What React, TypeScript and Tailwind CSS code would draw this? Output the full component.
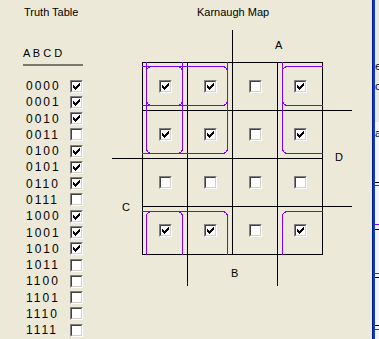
const ON = new Set([0, 1, 2, 4, 5, 6, 8, 9, 10]);
const GRAY = [0, 1, 3, 2];

function Check({ on }: { on: boolean }) {
  return (
    <div className="h-[13px] w-[13px] shrink-0 border border-b-white border-l-[#808080] border-r-white border-t-[#808080]">
      <div className="h-full w-full border border-b-[#d4d0c8] border-l-[#404040] border-r-[#d4d0c8] border-t-[#404040] bg-white p-[1px]">
        {on && (
          <svg width="7" height="7" viewBox="0 0 7 7" shapeRendering="crispEdges" className="block">
            <path
              fill="#000"
              d="M6 0h1v1h-1z M5 1h2v1h-2z M0 2h1v1h-1z M4 2h3v1h-3z M0 3h2v1h-2z M3 3h3v1h-3z M0 4h5v1h-5z M1 5h3v1h-3z M2 6h1v1h-1z"
            />
          </svg>
        )}
      </div>
    </div>
  );
}

function TruthTable() {
  const rows = Array.from({ length: 16 }, (_, i) => i);
  return (
    <div className="w-[100px] shrink-0 pl-[23px]">
      <div className="ml-[1px] mt-[6px] leading-[13px]">Truth Table</div>
      <div className="mt-[28px] leading-[13px]">A B C D</div>
      <div className="mt-[4px] h-[2px] w-[60px] bg-[#7a786d]" />
      <div className="mt-[12px] pl-[3px]">
        {rows.map((i) => (
          <div key={i} className="flex h-[16.27px] items-center">
            <span className="w-[44px] text-[12px] leading-[14px] tracking-[2px]">
              {i.toString(2).padStart(4, "0")}
            </span>
            <Check on={ON.has(i)} />
          </div>
        ))}
      </div>
    </div>
  );
}

// loops are clipped to the grid, wrapping groups stick out past the edge
const LOOPS = [
  { x: 146.5, y: 66.5, w: 81, h: 87 },
  { x: 146.5, y: 40, w: 81, h: 65.5 },
  { x: 146.5, y: 211.5, w: 81, h: 60 },
  { x: 110, y: 66.5, w: 72.5, h: 87 },
  { x: 282.5, y: 66.5, w: 60, h: 87 },
  { x: 110, y: 40, w: 72.5, h: 65.5 },
  { x: 282.5, y: 40, w: 60, h: 65.5 },
  { x: 110, y: 211.5, w: 72.5, h: 60 },
  { x: 282.5, y: 211.5, w: 60, h: 60 },
];

function KarnaughMap() {
  return (
    <div className="relative w-[272px] shrink-0">
      <div className="ml-[97px] mt-[6px] leading-[13px]">Karnaugh Map</div>
      <div className="ml-[42px] mt-[43px] grid w-[181px] grid-cols-4 border-l border-t border-black">
        {GRAY.map((cd) =>
          GRAY.map((ab) => (
            <div
              key={`${cd}-${ab}`}
              className="flex h-[48px] items-center justify-center border-b border-r border-black"
            >
              <Check on={ON.has(ab * 4 + cd)} />
            </div>
          ))
        )}
      </div>

      <svg
        className="pointer-events-none absolute left-0 top-0"
        width="272"
        height="339"
        viewBox="100 0 272 339"
      >
        <defs>
          <clipPath id="grid">
            <rect x="142" y="62" width="181" height="193" />
          </clipPath>
        </defs>
        <g stroke="#000" strokeWidth="1" shapeRendering="crispEdges">
          <line x1="232.5" y1="30" x2="232.5" y2="62" />
          <line x1="323" y1="110.5" x2="352" y2="110.5" />
          <line x1="323" y1="206.5" x2="352" y2="206.5" />
          <line x1="112" y1="158.5" x2="142" y2="158.5" />
          <line x1="187.5" y1="255" x2="187.5" y2="286" />
          <line x1="277.5" y1="255" x2="277.5" y2="286" />
        </g>
        <g clipPath="url(#grid)" fill="none" stroke="#8000ff" strokeWidth="1" shapeRendering="crispEdges">
          {LOOPS.map((l, i) => (
            <rect key={i} x={l.x} y={l.y} width={l.w} height={l.h} rx="5" />
          ))}
        </g>
      </svg>

      <span className="absolute left-[175px] top-[39px] leading-[13px]">A</span>
      <span className="absolute left-[235px] top-[151px] leading-[13px]">D</span>
      <span className="absolute left-[22px] top-[201px] leading-[13px]">C</span>
      <span className="absolute left-[131px] top-[267px] leading-[13px]">B</span>
    </div>
  );
}

function SideStrip() {
  return (
    <div className="flex w-[4px] shrink-0 flex-col overflow-hidden">
      <div className="h-[122px] shrink-0 pt-[60px] leading-[13px]">
        <div>e</div>
        <div className="mt-[7px]">c</div>
      </div>
      <div className="relative flex-1 bg-[#f7f6f1] pt-[5px] leading-[13px]">
        <div>au</div>
        <svg className="absolute left-0 top-0" width="4" height="217" shapeRendering="crispEdges">
          <g strokeWidth="1">
            <line x1="0" x2="4" y1="60.5" y2="60.5" stroke="#000" />
            <line x1="0" x2="4" y1="63.5" y2="63.5" stroke="#8000ff" />
            <line x1="0" x2="4" y1="102.5" y2="102.5" stroke="#8000ff" />
            <line x1="0" x2="4" y1="107.5" y2="107.5" stroke="#000" />
            <line x1="0" x2="4" y1="151.5" y2="151.5" stroke="#8000ff" />
            <line x1="0" x2="4" y1="155.5" y2="155.5" stroke="#000" />
            <line x1="0" x2="4" y1="203.5" y2="203.5" stroke="#000" />
            <line x1="0" x2="4" y1="207.5" y2="207.5" stroke="#8000ff" />
          </g>
        </svg>
      </div>
    </div>
  );
}

export default function App() {
  return (
    <div className="flex h-[339px] w-[379px] overflow-hidden bg-[#ece9d8] font-['Liberation_Sans',Arial,sans-serif] text-[11px] text-black">
      <TruthTable />
      <KarnaughMap />
      <div className="w-[3px] shrink-0 border-l border-[#001a8c] bg-[#0a3ad6]" />
      <SideStrip />
    </div>
  );
}
